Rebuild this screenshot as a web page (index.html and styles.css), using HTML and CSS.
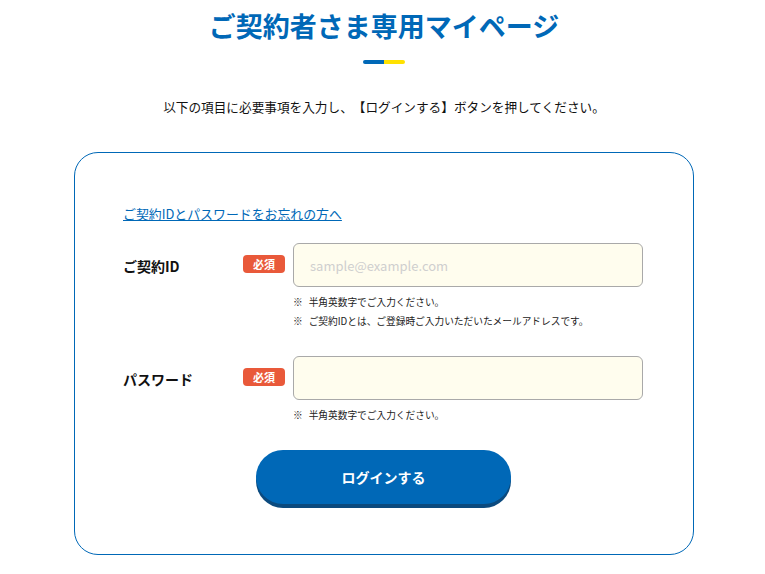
FILE: index.html
```html
<!DOCTYPE html>
<html lang="ja">
<head>
<meta charset="utf-8">
<title>ご契約者さま専用マイページ</title>
<link rel="stylesheet" href="styles.css">
</head>
<body>
<main class="page">
  <h1 class="title">ご契約者さま専用マイページ</h1>
  <div class="title-bar"><span class="bar-blue"></span><span class="bar-yellow"></span></div>
  <p class="lead">以下の項目に必要事項を入力し、【ログインする】ボタンを押してください。</p>
  <section class="card">
    <a class="forgot" href="#">ご契約IDとパスワードをお忘れの方へ</a>
    <div class="row row-id">
      <label class="label" for="uid">ご契約ID</label>
      <span class="badge">必須</span>
      <div class="field">
        <input class="input" id="uid" type="text" placeholder="sample@example.com">
        <p class="note"><span class="mark">※</span>半角英数字でご入力ください。</p>
        <p class="note"><span class="mark">※</span>ご契約IDとは、ご登録時ご入力いただいたメールアドレスです。</p>
      </div>
    </div>
    <div class="row row-pw">
      <label class="label" for="pw">パスワード</label>
      <span class="badge">必須</span>
      <div class="field">
        <input class="input" id="pw" type="password">
        <p class="note"><span class="mark">※</span>半角英数字でご入力ください。</p>
      </div>
    </div>
    <div class="actions">
      <button class="login" type="button">ログインする</button>
    </div>
  </section>
</main>
</body>
</html>
```

FILE: styles.css
```css
* { box-sizing: border-box; }
html, body { margin: 0; padding: 0; background: #fff; }
body {
  font-family: "Noto Sans CJK JP", "Noto Sans", sans-serif;
  color: #111;
  width: 765px;
  height: 574px;
  overflow: hidden;
  text-spacing-trim: space-all;
}
.page {
  display: flex;
  flex-direction: column;
  align-items: center;
  padding-top: 8px;
  padding-left: 3px;
}
.title {
  margin: 0;
  font-size: 27px;
  line-height: 36px;
  font-weight: 700;
  color: #0068b7;
}
.title-bar {
  display: flex;
  margin-top: 16px;
  width: 42px;
  height: 4px;
  border-radius: 2px;
  overflow: hidden;
}
.bar-blue { flex: 1; background: #0068b7; }
.bar-yellow { flex: 1; background: #ffe100; }
.lead {
  margin: 33px 0 0;
  font-size: 12.65px;
  line-height: 20px;
  color: #111;
}
.card {
  margin-top: 35px;
  width: 620px;
  border: 1px solid #0068b7;
  border-radius: 24px;
  padding: 51px 49px 50px 48px;
  display: flex;
  flex-direction: column;
}
.forgot {
  align-self: flex-start;
  font-size: 12.9px;
  line-height: 19px;
  color: #0068b7;
  text-decoration: underline;
}
.row {
  display: grid;
  grid-template-columns: 112px 42px 350px;
  column-gap: 8px;
  align-items: start;
}
.row-id { margin-top: 20px; }
.row-pw { margin-top: 25px; }
.label {
  font-size: 14px;
  font-weight: 700;
  line-height: 20px;
  margin-top: 13px;
  color: #111;
}
.badge {
  margin-top: 12px;
  height: 18px;
  border-radius: 4px;
  background: #e9593a;
  color: #fff;
  font-size: 11px;
  font-weight: 700;
  line-height: 18px;
  text-align: center;
}
.field { display: flex; flex-direction: column; }
.input {
  width: 350px;
  height: 44px;
  border: 1px solid #a9a9a9;
  border-radius: 6px;
  background: #fffdee;
  padding: 0 16px;
  font-family: inherit;
  font-size: 13px;
  color: #111;
  outline: none;
}
.input::placeholder { color: #cfcfcf; }
.note {
  margin: 0;
  font-size: 9.7px;
  line-height: 19px;
  color: #222;
}
.mark { margin-right: 6px; }
.field .input + .note { margin-top: 6px; }
.actions {
  margin-top: 25px;
  display: flex;
  justify-content: center;
}
.login {
  width: 255px;
  height: 54px;
  border: none;
  border-radius: 27px;
  background: #0068b7;
  box-shadow: 0 4px 0 #0b4a7e;
  color: #fff;
  font-family: inherit;
  font-size: 14px;
  font-weight: 700;
}
```
